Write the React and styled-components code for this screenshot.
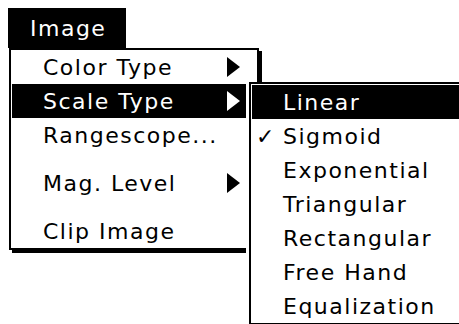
import React from 'react'
import styled, { createGlobalStyle } from 'styled-components'

const Global = createGlobalStyle`
  html, body {
    margin: 0;
    background: #fff;
  }
  body {
    font-family: "DejaVu Sans", sans-serif;
    font-size: 22px;
    color: #000;
  }
`

const Page = styled.div`
  width: 459px;
  height: 324px;
  overflow: hidden;
  padding: 8px 0 0 8px;
  box-sizing: border-box;
  display: flex;
  flex-direction: column;
  align-items: flex-start;
`

const Title = styled.div`
  width: 118px;
  height: 40px;
  background: #000;
  color: #fff;
  display: flex;
  align-items: center;
  padding-left: 22px;
  box-sizing: border-box;
  letter-spacing: 1.5px;
`

const Menu = styled.div`
  position: relative;
  width: 250px;
  margin-left: 1px;
  border: 2px solid #000;
  box-shadow: 3px 3px 0 #000;
  background: #fff;
  padding: 0 1px;
  box-sizing: border-box;
  display: flex;
  flex-direction: column;
`

const Row = styled.div`
  height: 34px;
  display: flex;
  align-items: center;
  padding-left: ${p => p.$indent}px;
  padding-right: 16px;
  background: ${p => (p.$active ? '#000' : '#fff')};
  color: ${p => (p.$active ? '#fff' : '#000')};
  letter-spacing: 1.5px;
  white-space: nowrap;
`

const Separator = styled.div`
  height: 14px;
`

const Arrow = styled.span`
  margin-left: auto;
  width: 0;
  height: 0;
  border-top: 10px solid transparent;
  border-bottom: 10px solid transparent;
  border-left: 13px solid ${p => (p.$light ? '#fff' : '#000')};
`

const SubMenu = styled.div`
  position: absolute;
  left: 238px;
  top: 32px;
  width: 260px;
  border: 2px solid #000;
  border-right: none;
  box-shadow: -3px 0 0 #fff;
  background: #fff;
  padding: 1px 0 0 1px;
  box-sizing: border-box;
  display: flex;
  flex-direction: column;
  z-index: 2;
`

const Check = styled.span`
  width: 27px;
  flex: none;
  letter-spacing: 0;
`

const subItems = ['Linear', 'Sigmoid', 'Exponential', 'Triangular', 'Rectangular', 'Free Hand', 'Equalization']

function App() {
  return (
    <Page>
      <Global />
      <Title>Image</Title>
      <Menu>
        <Row $indent={31}>Color Type<Arrow /></Row>
        <Row $indent={31} $active>Scale Type<Arrow $light /></Row>
        <Row $indent={31}>Rangescope...</Row>
        <Separator />
        <Row $indent={31}>Mag. Level<Arrow /></Row>
        <Separator />
        <Row $indent={31}>Clip Image</Row>
        <SubMenu>
          {subItems.map(item => (
            <Row key={item} $indent={4} $active={item === 'Linear'}>
              <Check>{item === 'Sigmoid' ? '✓' : ''}</Check>
              {item}
            </Row>
          ))}
        </SubMenu>
      </Menu>
    </Page>
  )
}

export default App
